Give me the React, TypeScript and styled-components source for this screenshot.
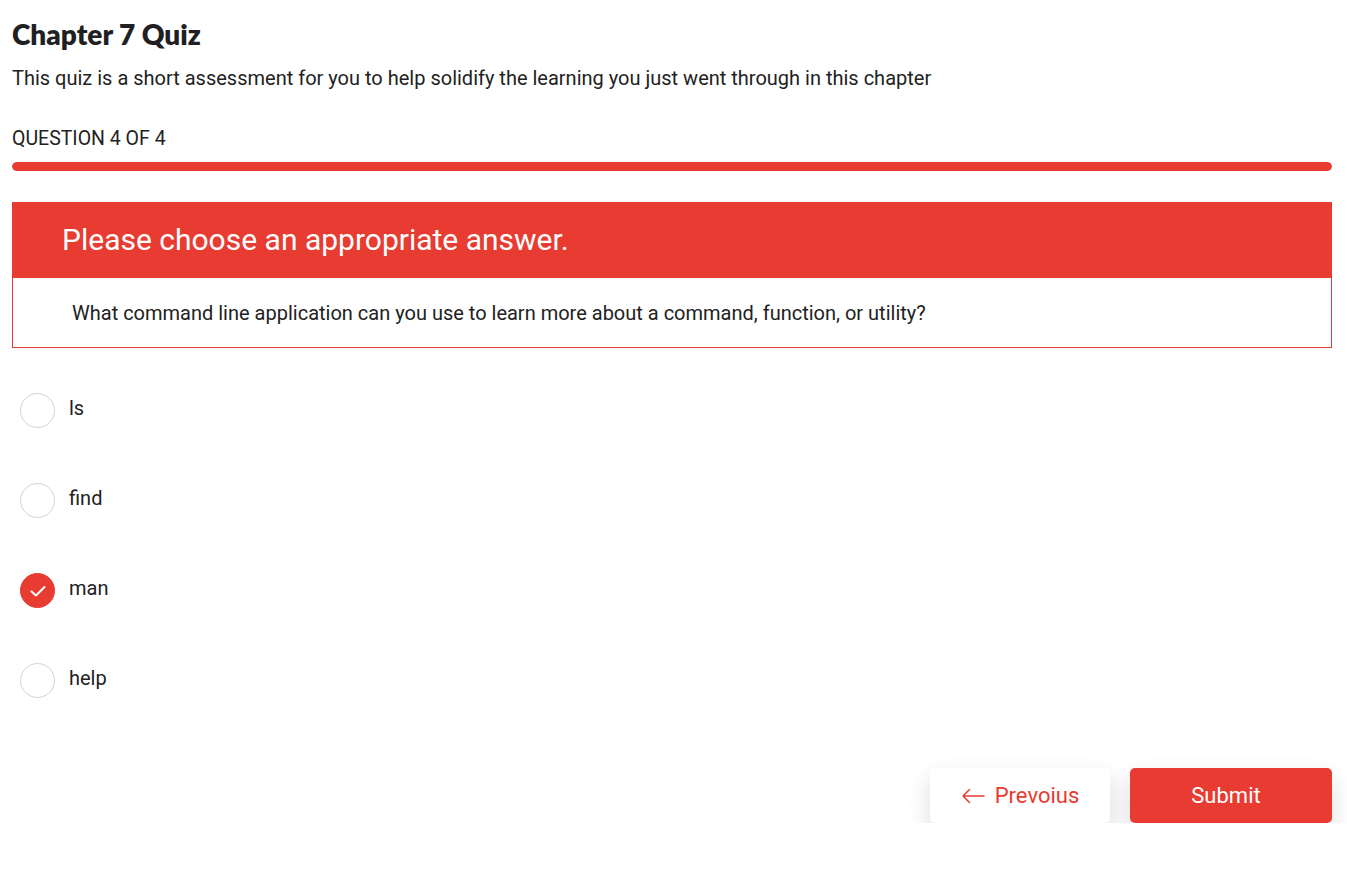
import React from "react";
import styled, { createGlobalStyle } from "styled-components";

const RED = "#e83b31";

const Global = createGlobalStyle`
  html, body { margin: 0; padding: 0; background: #fff; }
  body { font-family: Roboto, "Liberation Sans", sans-serif; color: #222; }
  * { box-sizing: border-box; }
`;

const Page = styled.main`
  padding: 16px 15px 0 12px;
  display: flex;
  flex-direction: column;
`;

const Title = styled.h1`
  margin: 0;
  font-family: Lato, "Liberation Sans", sans-serif;
  font-weight: 800;
  font-size: 28px;
  line-height: 36px;
  color: #1f1f24;
`;

const Description = styled.p`
  margin: 14px 0 0;
  font-size: 20px;
  line-height: 24px;
  color: #222;
`;

const Counter = styled.div`
  margin-top: 37px;
  font-size: 19.5px;
  line-height: 24px;
  color: #222;
`;

const Track = styled.div`
  margin-top: 11px;
  height: 9px;
  border-radius: 5px;
  background: #eee;
  overflow: hidden;
`;

const Fill = styled.div`
  height: 100%;
  background: ${RED};
  border-radius: 5px;
`;

const QuestionCard = styled.section`
  margin-top: 31px;
  border: 1px solid ${RED};
`;

const CardHeader = styled.div`
  background: ${RED};
  height: 75px;
  display: flex;
  align-items: center;
  padding-left: 49px;
  color: #fff;
  font-size: 30px;
  padding-bottom: 2px;
`;

const CardBody = styled.div`
  height: 69px;
  display: flex;
  align-items: center;
  padding-left: 59px;
  font-size: 20px;
  color: #222;
`;

const Options = styled.ul`
  list-style: none;
  margin: 45px 0 0;
  padding: 0 0 0 8px;
  display: flex;
  flex-direction: column;
  gap: 55px;
`;

const Option = styled.li`
  display: flex;
  align-items: center;
  gap: 14px;
  height: 35px;
  font-size: 20px;
  color: #222;
`;

const Radio = styled.span<{ $checked?: boolean }>`
  width: 35px;
  height: 35px;
  border-radius: 50%;
  border: 1px solid ${(p) => (p.$checked ? RED : "#d2d2d2")};
  background: ${(p) => (p.$checked ? RED : "#fff")};
  display: flex;
  align-items: center;
  justify-content: center;
  flex-shrink: 0;
`;

const Label = styled.span`
  margin-top: -5px;
`;

const Actions = styled.div`
  margin-top: 70px;
  display: flex;
  justify-content: flex-end;
  gap: 20px;
`;

const Button = styled.button<{ $primary?: boolean }>`
  height: 55px;
  border: none;
  border-radius: 5px;
  font-family: Roboto, "Liberation Sans", sans-serif;
  font-size: 22px;
  display: flex;
  align-items: center;
  justify-content: center;
  gap: 10px;
  cursor: pointer;
  box-shadow: 0 10px 24px rgba(0, 0, 0, 0.14);
  background: ${(p) => (p.$primary ? RED : "#fff")};
  color: ${(p) => (p.$primary ? "#fff" : RED)};
  width: ${(p) => (p.$primary ? "202px" : "180px")};
  padding: ${(p) => (p.$primary ? "0 10px 0 0" : "0")};
`;

const options = [
  { label: "ls", checked: false },
  { label: "find", checked: false },
  { label: "man", checked: true },
  { label: "help", checked: false },
];

export default function App() {
  return (
    <>
      <Global />
      <Page>
        <Title>Chapter 7 Quiz</Title>
        <Description>
          This quiz is a short assessment for you to help solidify the learning you just went through in this chapter
        </Description>
        <Counter>QUESTION 4 OF 4</Counter>
        <Track>
          <Fill style={{ width: `${(4 / 4) * 100}%` }} />
        </Track>
        <QuestionCard>
          <CardHeader>Please choose an appropriate answer.</CardHeader>
          <CardBody>
            What command line application can you use to learn more about a command, function, or utility?
          </CardBody>
        </QuestionCard>
        <Options>
          {options.map((o) => (
            <Option key={o.label}>
              <Radio $checked={o.checked}>
                {o.checked && (
                  <svg width="18" height="18" viewBox="0 0 18 18" fill="none">
                    <path d="M2.5 9.5 L7 13.5 L15.5 5" stroke="#fff" strokeWidth="2" strokeLinecap="round" strokeLinejoin="round" />
                  </svg>
                )}
              </Radio>
              <Label>{o.label}</Label>
            </Option>
          ))}
        </Options>
        <Actions>
          <Button>
            <svg width="24" height="16" viewBox="0 0 24 16" fill="none">
              <path d="M23 8 H2 M8.5 1.5 L2 8 L8.5 14.5" stroke={RED} strokeWidth="1.5" strokeLinecap="round" strokeLinejoin="round" />
            </svg>
            Prevoius
          </Button>
          <Button $primary>Submit</Button>
        </Actions>
      </Page>
    </>
  );
}
